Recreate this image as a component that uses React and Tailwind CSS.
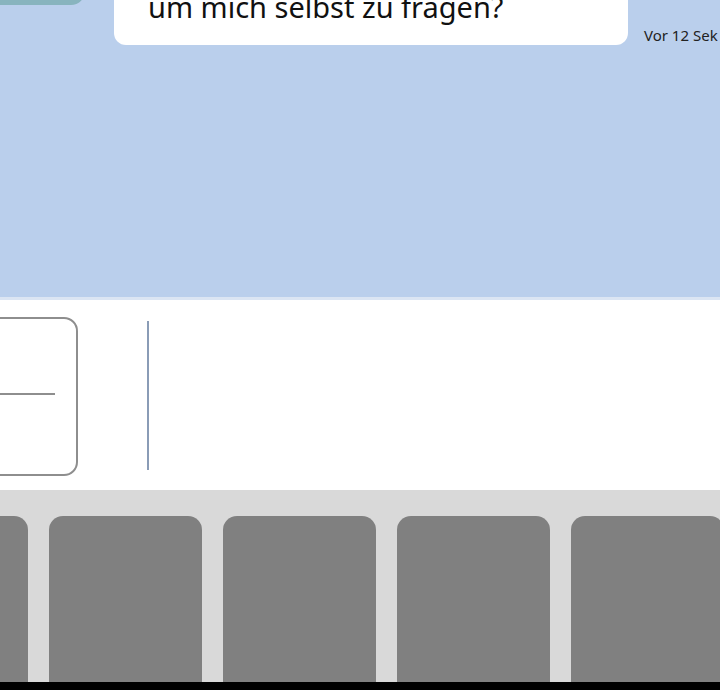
import React from 'react';

const keys = [0, 1, 2, 3, 4];

export default function App() {
  return (
    <div className="w-[720px] h-[700px] overflow-hidden bg-white flex flex-col" style={{ fontFamily: '"Noto Sans", sans-serif' }}>
      {/* chat */}
      <div className="h-[297px] shrink-0 bg-[#bacfec] overflow-hidden">
        <div className="-mt-[60px] flex flex-col">
          <div className="h-[65px] w-[85px] bg-[#88b4be] rounded-br-[14px]" />
          <div className="mt-[-20px] flex items-end">
            <div className="ml-[114px] w-[514px] bg-white rounded-[12px] pl-[34px] pt-[7px] pb-[23px]">
              <div className="text-[29px] leading-[30px] text-[#111]">um mich selbst zu fragen?</div>
            </div>
            <div className="ml-[16px] mb-[1px] text-[15px] leading-[18px] text-[#222] whitespace-nowrap">Vor 12 Sek</div>
          </div>
        </div>
      </div>
      <div className="h-[3px] shrink-0 bg-[#dbe5f3]" />

      {/* input */}
      <div className="h-[190px] shrink-0 bg-white flex items-start pt-[17px]">
        <div className="-ml-[40px] w-[118px] h-[159px] border-2 border-[#8e8e8e] rounded-[14px]">
          <div className="mt-[74px] w-[93px] h-[2px] bg-[#8e8e8e]" />
        </div>
        <div className="ml-[69px] mt-[4px] w-[2px] h-[149px] bg-[#8a9cb6]" />
      </div>

      {/* keyboard */}
      <div className="h-[192px] shrink-0 bg-[#d9d9d9] pt-[26px] overflow-hidden">
        <div className="-ml-[125px] flex gap-[21px] h-full">
          {keys.map((k) => (
            <div key={k} className="w-[153px] shrink-0 h-full bg-[#808080] rounded-t-[14px]" />
          ))}
          <div className="w-[153px] shrink-0 h-full bg-[#808080] rounded-t-[14px]" />
        </div>
      </div>
      <div className="h-[8px] shrink-0 bg-black" />
      <div className="flex-1 bg-white" />
    </div>
  );
}
